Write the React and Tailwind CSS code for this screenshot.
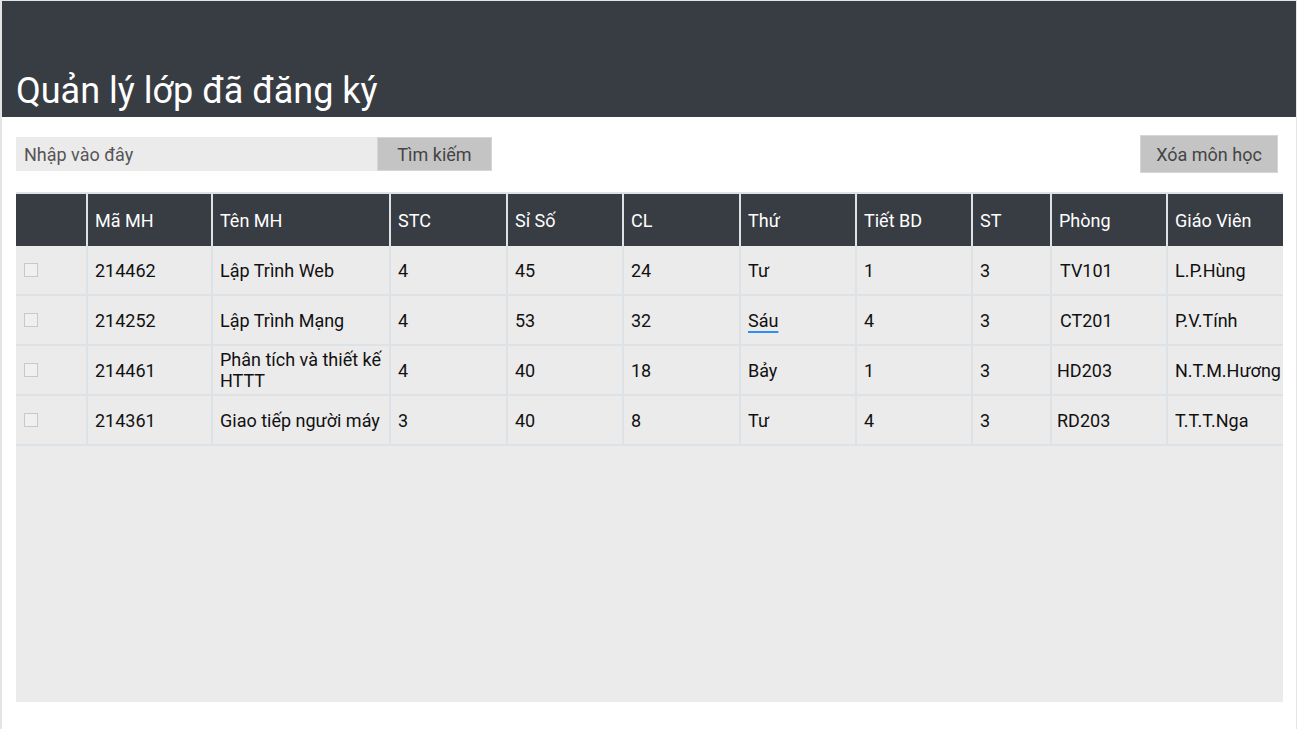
import React from "react";

const cols = "grid grid-cols-[70px_125px_178px_117px_116px_117px_116px_116px_79px_116px_117px]";

const headers = ["", "Mã MH", "Tên MH", "STC", "Sỉ Số", "CL", "Thứ", "Tiết BD", "ST", "Phòng", "Giáo Viên"];

const rows = [
  ["214462", "Lập Trình Web", "4", "45", "24", "Tư", "1", "3", "TV101", "L.P.Hùng"],
  ["214252", "Lập Trình Mạng", "4", "53", "32", "Sáu", "4", "3", "CT201", "P.V.Tính"],
  ["214461", "Phân tích và thiết kế HTTT", "4", "40", "18", "Bảy", "1", "3", "HD203", "N.T.M.Hương"],
  ["214361", "Giao tiếp người máy", "3", "40", "8", "Tư", "4", "3", "RD203", "T.T.T.Nga"],
];

export default function App() {
  return (
    <div
      className="w-[1297px] h-[729px] bg-white border-l-2 border-t border-r border-[#e4e4e4] flex flex-col overflow-hidden"
      style={{ fontFamily: "Roboto, 'Liberation Sans', sans-serif" }}
    >
      <div className="h-[116px] bg-[#383c43] pl-[14px] pt-[69px]">
        <h1 className="text-[36px] leading-[42px] text-white font-normal">Quản lý lớp đã đăng ký</h1>
      </div>

      <div className="flex items-center justify-between pl-[14px] pr-[18px] mt-[18px] h-[38px]">
        <div className="flex h-[34px]">
          <div className="w-[361px] bg-[#ecebeb] flex items-center pl-[8px] text-[18px] text-[#555]">Nhập vào đây</div>
          <div className="w-[115px] bg-[#c4c4c4] flex items-center justify-center text-[18px] text-[#444] border border-[#d6d6d6]">Tìm kiếm</div>
        </div>
        <div className="w-[138px] h-[38px] bg-[#c4c4c4] flex items-center justify-center text-[18px] text-[#444] border border-[#d6d6d6]">Xóa môn học</div>
      </div>

      <div className="ml-[14px] w-[1267px] mt-[19px] h-[510px] bg-[#ecebeb] border-t-2 border-[#dde2e7]">
        <div className={`${cols} h-[52px] bg-[#383c43] text-white text-[18px]`}>
          {headers.map((h, i) => (
            <div
              key={i}
              className={`flex items-center pl-[7px] ${i > 0 ? "border-l-2 border-[#dde2e7]" : ""}`}
            >
              {h}
            </div>
          ))}
        </div>
        {rows.map((r, ri) => (
          <div key={ri} className={`${cols} h-[50px] text-[18px] text-[#111] border-b-2 border-[#dde2e7]`}>
            <div className="flex items-center pl-[8px]">
              <div className="w-[14px] h-[14px] border border-[#c9c9c9] bg-[#f0f0f0]"></div>
            </div>
            {r.map((c, ci) => {
              let pad = "pl-[7px]";
              if (ci === 8) pad = c.startsWith("TV") || c.startsWith("CT") ? "pl-[8px]" : "pl-[5px]";
              return (
                <div
                  key={ci}
                  className={`flex items-center border-l-2 border-[#dde2e7] ${pad} pr-[2px] leading-[21px]`}
                >
                  {c === "Sáu" ? (
                    <span className="underline decoration-[#2f8ff0] decoration-2 underline-offset-[4px]">{c}</span>
                  ) : (
                    <span>{c}</span>
                  )}
                </div>
              );
            })}
          </div>
        ))}
      </div>
    </div>
  );
}
